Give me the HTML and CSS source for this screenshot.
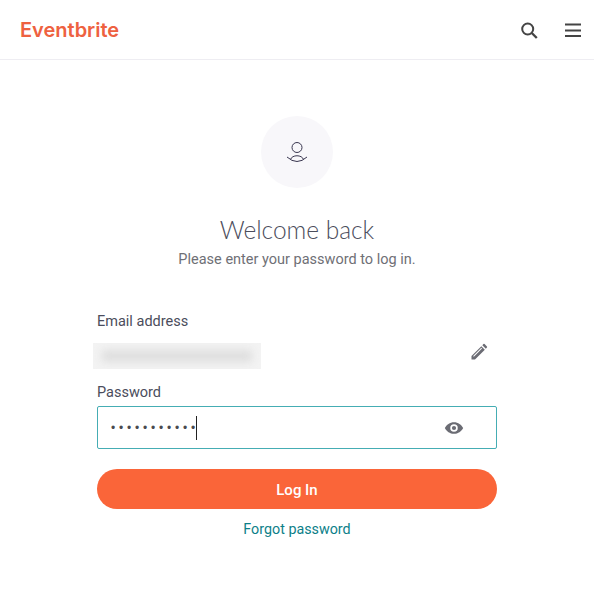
FILE: index.html
```html
<!DOCTYPE html>
<html lang="en">
<head>
<meta charset="utf-8">
<title>Eventbrite - Log in</title>
<link rel="stylesheet" href="styles.css">
</head>
<body>
<header class="topbar">
  <span class="logo">Eventbrite</span>
  <div class="top-actions">
    <svg class="top-icon" viewBox="0 0 24 24"><circle cx="10.700" cy="11" r="5.500" fill="none" stroke="#444" stroke-width="2"/><path fill="none" stroke="#444" stroke-width="2.400" d="M14.800 15l5 5"/></svg>
    <svg class="top-icon" viewBox="0 0 24 24"><path fill="#444" d="M4 5.500h16v2H4zM4 11.500h16v2H4zM4 17h16v2H4z"/></svg>
  </div>
</header>
<main class="content">
  <div class="avatar">
    <svg class="avatar-icon" viewBox="0 0 24 24" fill="none" stroke="#39364f" stroke-width="1"><circle cx="12" cy="7.500" r="5"/><path d="M2 17Q12 26 22 17M5.500 19.500C7 14.500 17 14.500 18.500 19.500"/></svg>
  </div>
  <h1 class="title">Welcome back</h1>
  <p class="subtitle">Please enter your password to log in.</p>
  <form class="form">
    <div class="label">Email address</div>
    <div class="email-row">
      <div class="email-blur"><div class="email-smear"></div></div>
      <svg class="pencil" viewBox="0 0 24 24"><path fill="#6b6c74" d="M3 21v-4.200L14.800 5l4.200 4.200L7.200 21H3zM16 3.800l1.300-1.300a1 1 0 0 1 1.400 0l2.800 2.800a1 1 0 0 1 0 1.400L20.200 8 16 3.800z"/><path fill="#fff" d="M5 16.800L14.800 7l.8.800-9.800 9.800z"/></svg>
    </div>
    <div class="label">Password</div>
    <div class="input">
      <span class="dots">•••••••••••</span><span class="caret"></span>
      <svg class="eye" viewBox="0 0 24 24"><path fill="#6b6c74" fill-rule="evenodd" d="M12 5c-5 0-9 3-11 7c2 4 6 7 11 7s9-3 11-7c-2-4-6-7-11-7zm0 11.500a4.500 4.500 0 1 1 0-9a4.500 4.500 0 0 1 0 9zM12 9.500a2.500 2.500 0 1 0 0 5a2.500 2.500 0 0 0 0-5z"/></svg>
    </div>
    <div class="button">Log In</div>
    <a class="forgot">Forgot password</a>
  </form>
</main>
</body>
</html>
```
FILE: styles.css
```css
* { box-sizing: border-box; }
html, body { margin: 0; padding: 0; background: #fff; }
body { width: 594px; height: 594px; overflow: hidden; font-family: "Roboto", "Liberation Sans", sans-serif; color: #4b4d5c; }
.topbar { height: 60px; border-bottom: 1px solid #eeedf2; display: flex; align-items: center; justify-content: space-between; padding: 0 9px 0 20px; }
.logo { font-family: "Inter", sans-serif; font-weight: 600; font-size: 20px; line-height: 24px; padding-top: 1px; color: #ee6140; }
.top-actions { display: flex; gap: 20px; }
.top-icon { width: 24px; height: 24px; display: block; }
.content { display: flex; flex-direction: column; align-items: center; padding-top: 56px; }
.avatar { width: 72px; height: 72px; border-radius: 50%; background: #f8f7fa; display: flex; align-items: center; justify-content: center; }
.avatar-icon { width: 24px; height: 24px; display: block; }
.title { margin: 26px 0 0; font-family: "Lato", sans-serif; font-weight: 300; font-size: 24.500px; line-height: 32px; color: #4b4d5c; }
.subtitle { margin: 3px 0 0; padding-top: 2px; font-size: 14.500px; line-height: 18px; color: #6f7076; }
.form { width: 400px; margin-top: 42px; display: flex; flex-direction: column; }
.label { padding-top: 2px; font-size: 14.500px; line-height: 18px; color: #4b4d5c; }
.email-row { height: 51px; display: flex; align-items: flex-start; justify-content: space-between; padding-right: 8px; }
.email-blur { width: 168px; height: 26px; margin: 12px 0 0 -4px; background: #f3f3f3; display: flex; align-items: center; justify-content: center; overflow: hidden; }
.email-smear { width: 150px; height: 12px; background: #dedede; filter: blur(4px); }
.pencil { width: 20px; height: 20px; margin-top: 11px; display: block; }
.input { height: 43px; margin-top: 4px; border: 1px solid #45adb4; border-radius: 2px; display: flex; align-items: center; padding: 0 32px 0 13px; }
.dots { font-size: 12px; letter-spacing: 3.800px; color: #4a4a4f; font-family: "Liberation Sans", sans-serif; }
.caret { width: 1px; height: 24px; background: #222; margin-left: -3px; }
.eye { width: 20px; height: 20px; margin-left: auto; display: block; }
.button { height: 40px; margin-top: 20px; padding-top: 1px; border-radius: 20px; background: #fa6539; color: #fff; font-weight: 500; font-size: 15px; display: flex; align-items: center; justify-content: center; }
.forgot { margin-top: 10px; padding-top: 1px; text-align: center; font-size: 14.300px; line-height: 18px; color: #0d7f89; }
```
